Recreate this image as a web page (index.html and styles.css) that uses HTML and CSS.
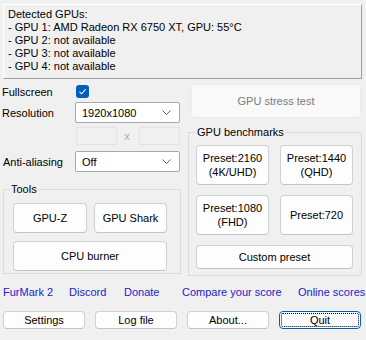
FILE: index.html
```html
<!DOCTYPE html>
<html lang="en">
<head>
    <meta charset="UTF-8">
    <meta name="viewport" content="width=device-width, initial-scale=1.0">
    <title>FurMark 2</title>
    <link rel="stylesheet" href="styles.css">
</head>
<body>
    <!-- detected gpus -->
    <div class="info">
        <div>Detected GPUs:</div>
        <div>- GPU 1: AMD Radeon RX 6750 XT, GPU: 55°C</div>
        <div>- GPU 2: not available</div>
        <div>- GPU 3: not available</div>
        <div>- GPU 4: not available</div>
    </div>

    <div class="main">
        <div class="left">
            <div class="row row-full">
                <span class="label">Fullscreen</span>
                <span class="check">
                    <svg width="13" height="13" viewBox="0 0 13 13"><path d="M3.5 6.8 L5.6 8.8 L9.6 4.4" fill="none" stroke="#fff" stroke-width="1.1"/></svg>
                </span>
            </div>
            <div class="row row-res">
                <span class="label">Resolution</span>
                <div class="combo">
                    <span>1920x1080</span>
                    <svg width="9" height="5" viewBox="0 0 9 5"><path d="M0.5 0.5 L4.5 4.5 L8.5 0.5" fill="none" stroke="#5f5f5f" stroke-width="1"/></svg>
                </div>
            </div>
            <div class="row row-size">
                <span class="label"></span>
                <span class="field"></span>
                <span class="times">x</span>
                <span class="field"></span>
            </div>
            <div class="row row-aa">
                <span class="label">Anti-aliasing</span>
                <div class="combo">
                    <span>Off</span>
                    <svg width="9" height="5" viewBox="0 0 9 5"><path d="M0.5 0.5 L4.5 4.5 L8.5 0.5" fill="none" stroke="#5f5f5f" stroke-width="1"/></svg>
                </div>
            </div>

            <fieldset class="group tools">
                <legend>Tools</legend>
                <div class="tool-grid">
                    <button class="btn">GPU-Z</button>
                    <button class="btn">GPU Shark</button>
                    <button class="btn wide">CPU burner</button>
                </div>
            </fieldset>
        </div>

        <div class="right">
            <button class="btn stress" disabled>GPU stress test</button>
            <fieldset class="group bench">
                <legend>GPU benchmarks</legend>
                <div class="bench-grid">
                    <button class="btn preset">Preset:2160<br>(4K/UHD)</button>
                    <button class="btn preset">Preset:1440<br>(QHD)</button>
                    <button class="btn preset">Preset:1080<br>(FHD)</button>
                    <button class="btn preset">Preset:720</button>
                    <button class="btn wide custom">Custom preset</button>
                </div>
            </fieldset>
        </div>
    </div>

    <div class="links">
        <a href="#">FurMark 2</a>
        <a href="#">Discord</a>
        <a href="#">Donate</a>
        <a href="#">Compare your score</a>
        <a href="#">Online scores</a>
    </div>

    <div class="bottom">
        <button class="btn small">Settings</button>
        <button class="btn small">Log file</button>
        <button class="btn small">About...</button>
        <button class="btn small quit">Quit</button>
    </div>
</body>
</html>
```

FILE: styles.css
```css
body {
    font-family: "Liberation Sans", Arial, sans-serif;
    font-size: 11px;
    color: #000;
    background-color: #f0f0f0;
    margin: 0;
    padding: 0;
}

.info {
    margin: 4px 0 0 3px;
    width: 349px;
    height: 67px;
    padding: 3px 4px;
    line-height: 13px;
    border: 1px solid #fff;
    border-right-color: #a0a0a0;
    border-bottom-color: #a0a0a0;
}

.main {
    display: flex;
}

.left {
    width: 188px;
}

.row {
    display: flex;
    align-items: center;
    margin-left: 2px;
}

.label {
    width: 73px;
}

.row-full {
    height: 17px;
    margin-top: 4px;
}

.check {
    width: 13px;
    height: 13px;
    margin-left: 1px;
    background-color: #005fb8;
    border-radius: 3px;
    display: flex;
}

.row-res {
    margin-top: 2px;
}

.combo {
    background-color: #fff;
    border: 1px solid #a8a8a8;
    border-radius: 2px;
    display: flex;
    align-items: center;
    justify-content: space-between;
    padding: 0 0 0 6px;
    box-sizing: border-box;
    width: 105px;
    height: 21px;
}

.combo svg {
    margin-right: 8px;
}

.row-size {
    margin-top: 4px;
    height: 18px;
}

.field {
    width: 41px;
    height: 18px;
    box-sizing: border-box;
    border: 1px solid #e3e3e3;
    margin-left: 1px;
}

.times {
    width: 22px;
    text-align: center;
    color: #a8a8a8;
    margin-left: -1px;
}

.row-aa {
    margin-top: 6px;
}

.row-aa .label {
    padding-left: 1px;
    width: 72px;
}

.group {
    border: 1px solid #dcdcdc;
    margin: 0;
    min-width: 0;
}

.group legend {
    line-height: 14px;
    padding: 0 1px;
}

.tools {
    margin: 10px 0 0 3px;
    width: 178px;
    box-sizing: border-box;
    padding: 7px 13px 2px 9px;
}

.tools legend {
    margin-left: -3px;
}

.tool-grid {
    display: grid;
    grid-template-columns: 74px 73px;
    grid-auto-rows: 30px;
    column-gap: 7px;
    row-gap: 8px;
}

.btn {
    font-family: "Liberation Sans", Arial, sans-serif;
    font-size: 11px;
    color: #000;
    background-color: #fdfdfd;
    border: 1px solid #d0d0d0;
    border-bottom-color: #c4c4c4;
    border-radius: 4px;
    padding: 0;
    margin: 0;
    line-height: 14px;
}

.wide {
    grid-column: 1 / 3;
}

.right {
    width: 174px;
}

.stress {
    margin: 5px 0 0 3px;
    width: 170px;
    height: 34px;
    display: block;
    background-color: #f9f9f9;
    border-color: #ececec;
    color: #7a7a7a;
}

.bench {
    margin-top: 7px;
    width: 174px;
    box-sizing: border-box;
    padding: 6px 9px 6px 7px;
}

.bench-grid {
    display: grid;
    grid-template-columns: 73px 73px;
    grid-template-rows: 40px 40px 24px;
    column-gap: 11px;
    row-gap: 10px;
}

.links {
    display: grid;
    grid-template-columns: 66px 55px 58px 116px auto;
    margin: 9px 0 0 3px;
    line-height: 14px;
    white-space: nowrap;
}

.links a {
    color: #2222c8;
    text-decoration: none;
}

.bottom {
    display: grid;
    grid-template-columns: repeat(4, 82px);
    column-gap: 10px;
    margin: 12px 0 0 3px;
}

.small {
    height: 18px;
    line-height: 16px;
}

.quit {
    border-color: #005fb8;
    outline: 1px dotted #000;
    outline-offset: -3px;
}
```
